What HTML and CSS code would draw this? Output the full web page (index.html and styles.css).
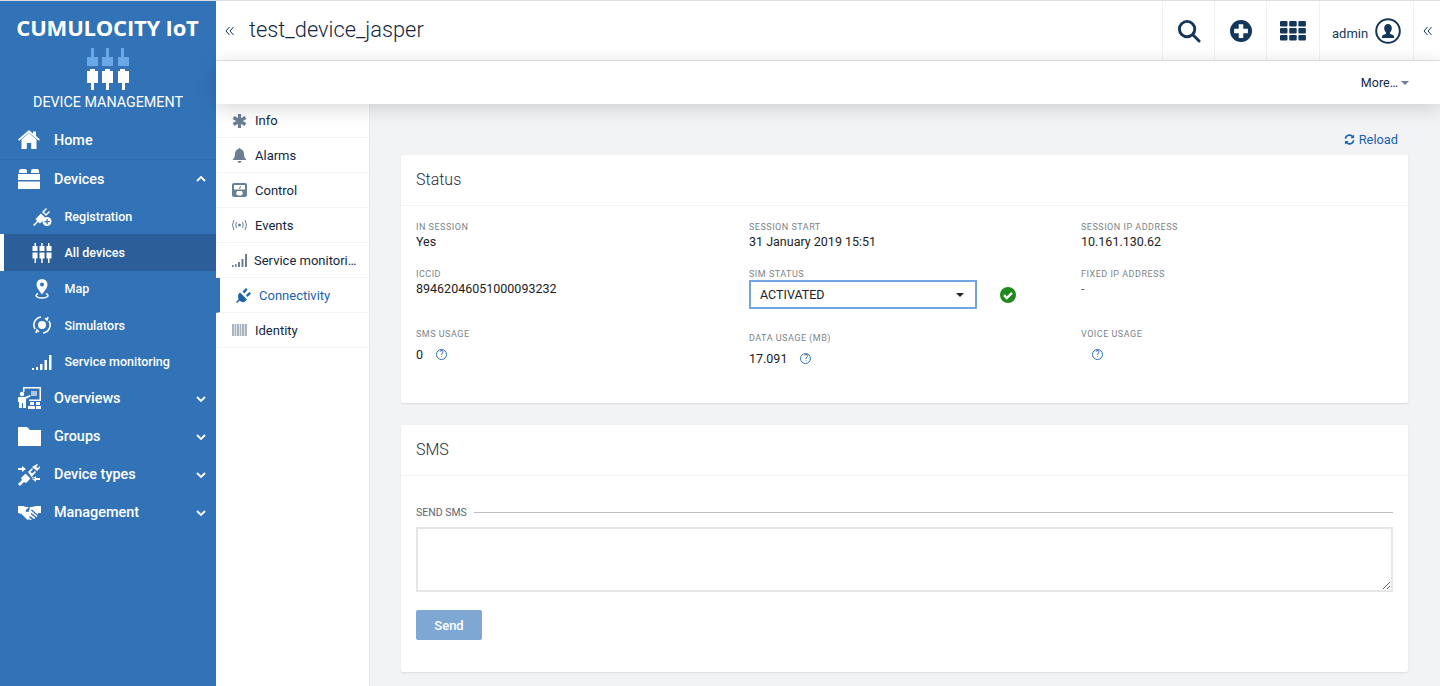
FILE: index.html
```html
<!DOCTYPE html>
<html lang="en">
<head>
  <meta charset="UTF-8">
  <meta name="viewport" content="width=device-width, initial-scale=1.0">
  <title>test_device_jasper</title>
  <link rel="stylesheet" href="styles.css">
</head>
<body>
  <div class="app">
    <aside class="sidebar">
      <div class="brand">
        <div class="brand-name">CUMULOCITY IoT</div>
        <svg class="brand-icon" width="42" height="42" viewBox="0 0 42 42">
          <g fill="#6aa8e6">
            <path d="M4 0h3v9h4v9H0V9h4zM19 0h3v9h4v9H15V9h4zM34 0h3v9h5v9H31V9h3z"/>
          </g>
          <g fill="#fff">
            <path d="M3 21h5v2h3v12H7v7H4v-7H0V23h3zM18 21h5v2h3v12h-4v7h-3v-7h-4V23h3zM33 21h5v2h4v12h-4v7h-3v-7h-4V23h2z"/>
          </g>
        </svg>
        <div class="brand-app">DEVICE MANAGEMENT</div>
      </div>
      <nav class="nav">
        <a class="nav-item nav-first">
          <svg class="nav-icon" width="22" height="20" viewBox="0 0 22 20" fill="#fff"><path d="M11 3 3.500 9.500V19h5.300v-6h4.400v6h5.300V9.500zM11 0 0 9.500l1.200 1.300L11 2.400l9.800 8.400 1.200-1.300-4-3.400V1.500h-3v2.200z"/></svg>
          <span>Home</span>
        </a>
        <a class="nav-item nav-open">
          <svg class="nav-icon" width="22" height="22" viewBox="0 0 22 22" fill="#fff"><path d="M1 3q0-2 2-2h4q2 0 2 2v2H1zM13 3q0-2 2-2h4q2 0 2 2v2h-8zM0 6h22v6H0zM0 13.500h22V21H0z"/></svg>
          <span>Devices</span>
          <svg class="chev" width="10" height="6" viewBox="0 0 10 6"><path d="M1 5l4-4 4 4" fill="none" stroke="#fff" stroke-width="1.800"/></svg>
        </a>
        <a class="sub-item">
          <svg class="sub-icon" width="20" height="20" viewBox="0 0 20 20" fill="#fff"><path d="M1 19l4-4-1.500-2L9 7.500l4 4-2 2.500a6 6 0 0 0-.5 1L8 17.500l-2-1.500-3.500 4zM10 6l4-4 1 1-3 3 2 2 3-3 1 1-4 4z"/><circle cx="15" cy="15.500" r="4.500"/><path d="M14.500 13h1.200v2h2v1.200h-2v2h-1.200v-2h-2V15h2z" fill="#3273b8"/></svg>
          <span>Registration</span>
        </a>
        <a class="sub-item sub-active">
          <svg class="sub-icon" width="20" height="20" viewBox="0 0 20 20" fill="#fff"><path d="M2.500 0h1.500v3h1.500v5H.5V3h2zM9.200 0h1.500v3h1.800v5h-5V3h1.700zM16 0h1.500v3h2v5h-5V3H16zM.5 9.500h5v6H4V20H2.500v-4.500h-2zM7.500 9.500h5v6h-1.800V20H9.200v-4.500H7.500zM14.500 9.500h5v6h-2V20H16v-4.500h-1.500z"/></svg>
          <span>All devices</span>
        </a>
        <a class="sub-item">
          <svg class="sub-icon sub-icon-map" width="14" height="20" viewBox="0 0 14 20"><path d="M7 0a5.500 5.500 0 0 1 5.500 5.500C12.500 9 9 12.500 7 15.500 5 12.500 1.500 9 1.500 5.500A5.500 5.500 0 0 1 7 0z" fill="#fff"/><circle cx="7" cy="5.500" r="2" fill="#3273b8"/><path d="M3 14.500c-4 2-1.500 4.500 4 4.500s8-2.500 4-4.500" fill="none" stroke="#fff" stroke-width="1.400"/></svg>
          <span>Map</span>
        </a>
        <a class="sub-item">
          <svg class="sub-icon" width="20" height="20" viewBox="0 0 20 20" fill="none" stroke="#fff" stroke-width="1.600"><circle cx="10" cy="10" r="4" fill="#fff" stroke="none"/><path d="M3 14A8 8 0 0 1 9 2M11 18a8 8 0 0 0 6-12M13 3l2 2 1-3M7 17l-2-2-1 3"/></svg>
          <span>Simulators</span>
        </a>
        <a class="sub-item">
          <svg class="sub-icon" width="20" height="20" viewBox="0 0 20 20" fill="#fff"><path d="M0 16h2v2H0zM4 15h2v3H4zM8 12h2.500v6H8zM12.500 8H15v10h-2.500zM17 3h2.500v15H17z"/></svg>
          <span>Service monitoring</span>
        </a>
        <a class="nav-item">
          <svg class="nav-icon" width="24" height="23" viewBox="0 0 24 23" fill="#fff"><path d="M5 0h18v14H11v-1.500h10.500v-11H6.500V5H5z"/><path d="M13 4h6v5h-6z" opacity=".6"/><circle cx="4" cy="7" r="2.200"/><path d="M0 10h7l5-2 .6 1.200L8 12v9H5v-5H4v5H1v-6H0zM12 15h4v3h-4zM18 15h4v3h-4zM10 19h7v3h-7zM18 19h5v3h-5z"/></svg>
          <span>Overviews</span>
          <svg class="chev" width="10" height="6" viewBox="0 0 10 6"><path d="M1 1l4 4 4-4" fill="none" stroke="#fff" stroke-width="1.800"/></svg>
        </a>
        <a class="nav-item">
          <svg class="nav-icon" width="23" height="19" viewBox="0 0 23 19" fill="#fff"><path d="M0 0h9l3 3h11v16H0z"/></svg>
          <span>Groups</span>
          <svg class="chev" width="10" height="6" viewBox="0 0 10 6"><path d="M1 1l4 4 4-4" fill="none" stroke="#fff" stroke-width="1.800"/></svg>
        </a>
        <a class="nav-item">
          <svg class="nav-icon" width="22" height="22" viewBox="0 0 22 22" fill="#fff"><path d="M0 20l4-4-1-2 4.500-4.500 5 5L8 19l-2-1-4 4zM10 8l4-4 1 1-2.500 3 1.500 1.500L17 7l1 1-4 4.500 3 2-2 .5zM14 3l5-3 1 1-2 2 2 1 2-2v2l-3 3zM0 4h4V2l4 3-4 3V6H0zM18 14v-2l-4 3 4 3v-2h4v-2z"/></svg>
          <span>Device types</span>
          <svg class="chev" width="10" height="6" viewBox="0 0 10 6"><path d="M1 1l4 4 4-4" fill="none" stroke="#fff" stroke-width="1.800"/></svg>
        </a>
        <a class="nav-item">
          <svg class="nav-icon" width="23" height="15" viewBox="0 0 23 15" fill="#fff"><path d="M0 1h5l3 1h3L8 5q-1 2 1 2 2 0 3.500-2l7 6-1 1-5-4-1 1 5 4-1.500 1-4-3-1 1 3 3-1 1-2-2-1.500 1-6-6L0 8zM12 2h2l4-1h5v7h-2.500l-1 1.500L14 4.500q-1.500 1-3 1.500z"/></svg>
          <span>Management</span>
          <svg class="chev" width="10" height="6" viewBox="0 0 10 6"><path d="M1 1l4 4 4-4" fill="none" stroke="#fff" stroke-width="1.800"/></svg>
        </a>
      </nav>
    </aside>

    <div class="main">
      <header class="topbar">
        <div class="collapse">
          <svg width="9" height="10" viewBox="0 0 9 10" fill="none" stroke="#14365a"><path d="M4.500 1 1 5l3.500 4M8.500 1 5 5l3.500 4"/></svg>
        </div>
        <h1 class="title">test_device_jasper</h1>
        <div class="top-btn">
          <svg width="24" height="24" viewBox="0 0 25 25" fill="none" stroke="#14365a" stroke-width="3"><circle cx="10.500" cy="10.500" r="8"/><path d="M16.500 16.500l6.500 6.500" stroke-linecap="round"/></svg>
        </div>
        <div class="top-btn">
          <svg width="22" height="22" viewBox="0 0 24 24"><circle cx="12" cy="12" r="12" fill="#14365a"/><path d="M9.500 4.500h5v5h5v5h-5v5h-5v-5h-5v-5h5z" fill="#fff"/></svg>
        </div>
        <div class="top-btn top-apps">
          <svg width="26" height="20" viewBox="0 0 26 20" fill="#14365a"><rect width="7.500" height="5.500" rx="1"/><rect x="9.200" width="7.500" height="5.500" rx="1"/><rect x="18.400" width="7.500" height="5.500" rx="1"/><rect y="7" width="7.500" height="5.500" rx="1"/><rect x="9.200" y="7" width="7.500" height="5.500" rx="1"/><rect x="18.400" y="7" width="7.500" height="5.500" rx="1"/><rect y="14" width="7.500" height="5.500" rx="1"/><rect x="9.200" y="14" width="7.500" height="5.500" rx="1"/><rect x="18.400" y="14" width="7.500" height="5.500" rx="1"/></svg>
        </div>
        <div class="top-user">
          <span>admin</span>
          <svg width="26" height="26" viewBox="0 0 26 26"><circle cx="13" cy="13" r="11.800" fill="none" stroke="#14365a" stroke-width="2"/><path d="M13 6c2.500 0 3.800 2 3.800 4.200 0 2-1 3.500-1.800 4.300v1.300c1 .6 3.500 1 4 2.200v2h-12v-2c.5-1.200 3-1.600 4-2.200v-1.300c-.8-.8-1.800-2.300-1.800-4.300C9.200 8 10.500 6 13 6z" fill="#14365a"/></svg>
        </div>
        <div class="collapse collapse-right">
          <svg width="9" height="10" viewBox="0 0 9 10" fill="none" stroke="#14365a"><path d="M4.500 1 1 5l3.500 4M8.500 1 5 5l3.500 4"/></svg>
        </div>
      </header>
      <div class="actionbar">
        <span>More…</span>
        <i class="caret"></i>
      </div>

      <div class="body">
        <ul class="tabs">
          <li class="tab tab-first">
            <svg class="tab-icon" width="15" height="14" viewBox="0 0 15 14" fill="none" stroke="#6a7f94" stroke-width="3.200"><path d="M7.500 0v14M1.500 3.500l12 7M1.500 10.500l12-7"/></svg>
            <span>Info</span>
          </li>
          <li class="tab">
            <svg class="tab-icon" width="15" height="15" viewBox="0 0 14 15" fill="#6a7f94"><path d="M7 0q1 0 1 1 3.500 1 3.500 5c0 3 1 4.500 2.500 6H0c1.500-1.500 2.500-3 2.500-6Q2.500 2 6 1q0-1 1-1zM5 13h4q-.5 2-2 2t-2-2z"/></svg>
            <span>Alarms</span>
          </li>
          <li class="tab">
            <svg class="tab-icon" width="15" height="14" viewBox="0 0 15 14"><rect width="15" height="14" rx="2" fill="#6a7f94"/><rect x="2" y="2" width="11" height="4.500" fill="#fff"/><path d="M7.500 6l1-3" stroke="#6a7f94"/><path d="M5 8h5l1 3-2 1.500H6L4 11z" fill="#fff"/></svg>
            <span>Control</span>
          </li>
          <li class="tab">
            <svg class="tab-icon" width="15" height="12" viewBox="0 0 15 12" fill="none" stroke="#6a7f94"><circle cx="7.500" cy="6" r="1.500" fill="#6a7f94" stroke="none"/><path d="M4.500 3q-1.500 3 0 6M10.500 3q1.500 3 0 6M2 1q-3 5 0 10M13 1q3 5 0 10"/></svg>
            <span>Events</span>
          </li>
          <li class="tab tab-narrow">
            <svg class="tab-icon" width="15" height="13" viewBox="0 0 15 13" fill="#6a7f94"><path d="M0 11h1.500v2H0zM3 10h1.500v3H3zM6 8h2v5H6zM9.500 5h2v8h-2zM13 0h2v13h-2z"/></svg>
            <span>Service monitori…</span>
          </li>
          <li class="tab tab-active">
            <svg class="tab-icon" width="15" height="15" viewBox="0 0 15 15" fill="#1b62ad"><path d="M4 4.500l7 7-2 2Q6.500 15 4 13 1 10 2.500 6zM6.500 3.500 10 0l1.500 1.500-3 4zM10 7l3.500-3L15 5.500 11.500 9zM0 14l3.500-3.500 1.200 1.200L1 15z"/></svg>
            <span>Connectivity</span>
          </li>
          <li class="tab">
            <svg class="tab-icon" width="15" height="12" viewBox="0 0 15 12"><rect width="15" height="12" fill="#dfe3e7"/><path d="M0 0h2v12H0zM3 0h1v12H3zM5 0h2v12H5zM8 0h1v12H8zM10 0h2v12h-2zM13 0h2v12h-2z" fill="#a9b4bf"/></svg>
            <span>Identity</span>
          </li>
        </ul>

        <section class="content">
          <div class="reload">
            <svg width="11" height="11" viewBox="0 0 12 12" fill="none" stroke="#1b62ad" stroke-width="1.800"><path d="M1.500 5A4.500 4.500 0 0 1 9.500 3M10.500 7A4.500 4.500 0 0 1 2.500 9"/><path d="M11 .5v4H7zM1 11.500v-4h4z" fill="#1b62ad" stroke="none"/></svg>
            <span>Reload</span>
          </div>

          <div class="card card-status">
            <div class="card-head">Status</div>
            <div class="grid">
              <div class="field">
                <label>IN SESSION</label>
                <div class="value">Yes</div>
              </div>
              <div class="field">
                <label>SESSION START</label>
                <div class="value">31 January 2019 15:51</div>
              </div>
              <div class="field">
                <label>SESSION IP ADDRESS</label>
                <div class="value">10.161.130.62</div>
              </div>
              <div class="field">
                <label>ICCID</label>
                <div class="value">89462046051000093232</div>
              </div>
              <div class="field">
                <label>SIM STATUS</label>
                <div class="sim-row">
                  <div class="select"><span>ACTIVATED</span><i class="select-caret"></i></div>
                  <svg width="16" height="16" viewBox="0 0 16 16"><circle cx="8" cy="8" r="8" fill="#1e8a1e"/><path d="M4 8.200l2.800 2.800L12 5.800" fill="none" stroke="#fff" stroke-width="2.400"/></svg>
                </div>
              </div>
              <div class="field">
                <label>FIXED IP ADDRESS</label>
                <div class="value value-dash">-</div>
              </div>
              <div class="field">
                <label>SMS USAGE</label>
                <div class="value usage"><span>0</span><i class="help">?</i></div>
              </div>
              <div class="field field-data">
                <label>DATA USAGE (MB)</label>
                <div class="value usage"><span>17.091</span><i class="help">?</i></div>
              </div>
              <div class="field">
                <label>VOICE USAGE</label>
                <div class="value usage usage-voice"><i class="help">?</i></div>
              </div>
            </div>
          </div>

          <div class="card card-sms">
            <div class="card-head">SMS</div>
            <div class="sms-body">
              <div class="legend"><span>SEND SMS</span><i></i></div>
              <textarea class="sms-text"></textarea>
              <button class="send">Send</button>
            </div>
          </div>
        </section>
      </div>
    </div>
  </div>
</body>
</html>
```

FILE: styles.css
```css
* {
  box-sizing: border-box;
}
html, body {
  margin: 0;
  height: 686px;
  overflow: hidden;
}
body {
  font-family: Roboto, "Liberation Sans", sans-serif;
  font-size: 13px;
  color: #14273f;
  background: #fff;
}
.app {
  display: flex;
  height: 686px;
  border-top: 1px solid #dcdfe2;
}
.sidebar {
  width: 216px;
  flex: none;
  background: #3273b8;
  color: #fff;
}
.brand {
  display: flex;
  flex-direction: column;
  align-items: center;
  height: 114px;
}
.brand-name {
  font-family: "Open Sans", Lato, sans-serif;
  font-size: 22px;
  font-weight: 700;
  line-height: 24px;
  margin-top: 14px;
  padding-right: 1px;
  white-space: nowrap;
  letter-spacing: -.2px;
}
.brand-icon {
  margin-top: 9px;
  flex: none;
}
.brand-app {
  font-size: 14.300px;
  line-height: 16px;
  margin-top: 4px;
  white-space: nowrap;
}
.nav-item {
  display: flex;
  align-items: center;
  height: 38px;
  padding-left: 18px;
  font-size: 14.400px;
  font-weight: 500;
  position: relative;
}
.nav-first {
  height: 44px;
  padding-top: 6px;
}
.nav-open {
  height: 39px;
  border-top: 1px solid #2f6cae;
}
.nav-item span {
  position: absolute;
  left: 54px;
}
.nav-icon {
  flex: none;
}
.chev {
  margin-left: auto;
  margin-right: 10px;
}
.sub-item {
  display: flex;
  align-items: center;
  height: 36.400px;
  font-size: 12.500px;
  font-weight: 500;
  position: relative;
}
.sub-active {
  background: #2c5f99;
  border-left: 4px solid #fff;
}
.sub-icon {
  position: absolute;
  left: 32px;
}
.sub-icon-map {
  left: 35px;
}
.sub-item span {
  position: absolute;
  left: 64.500px;
}
.sub-active .sub-icon {
  left: 28px;
}
.sub-active span {
  left: 60.500px;
}

.main {
  flex: 1;
  min-width: 0;
  display: flex;
  flex-direction: column;
}
.topbar {
  display: flex;
  align-items: stretch;
  height: 60px;
  border-bottom: 1px solid #e2e4e6;
  flex: none;
}
.collapse {
  width: 27px;
  padding-left: 9px;
  display: flex;
  align-items: center;
}
.collapse-right {
  border-left: 1px solid #eff0f1;
}
.title {
  flex: 1;
  margin: 0 0 0 6px;
  font-size: 21.800px;
  font-weight: 300;
  line-height: 58px;
  color: #14273f;
}
.top-btn {
  width: 52px;
  display: flex;
  align-items: center;
  justify-content: center;
  border-left: 1px solid #eff0f1;
}
.top-apps {
  width: 53px;
}
.top-user {
  width: 94px;
  display: flex;
  align-items: center;
  gap: 7px;
  padding-left: 12px;
  border-left: 1px solid #eff0f1;
  font-size: 13px;
  color: #14365a;
}
.top-user span {
  padding-top: 6px;
}
.actionbar {
  display: flex;
  align-items: center;
  justify-content: flex-end;
  height: 43px;
  padding-right: 31px;
  flex: none;
  background: #fff;
  box-shadow: 0 4px 20px rgba(0, 0, 0, .16);
  position: relative;
  z-index: 2;
  font-size: 12.500px;
  color: #14273f;
}
.caret {
  width: 0;
  height: 0;
  margin-left: 3px;
  border-left: 4px solid transparent;
  border-right: 4px solid transparent;
  border-top: 4px solid #6a7f94;
}
.body {
  flex: 1;
  min-height: 0;
  display: flex;
}
.tabs {
  width: 154px;
  flex: none;
  margin: 0;
  padding: 0;
  list-style: none;
  background: #fff;
  border-right: 1px solid #e6e8ea;
}
.tab {
  height: 35px;
  display: flex;
  align-items: center;
  gap: 8px;
  padding-left: 16px;
  border-bottom: 1px solid #f2f3f4;
  white-space: nowrap;
  color: #14273f;
}
.tab-first {
  height: 34px;
}
.tab-icon {
  flex: none;
}
.tab-narrow {
  gap: 7px;
}
.tab-active {
  border-left: 4px solid #3273b8;
  color: #1b62ad;
  margin-right: -1px;
}
.content {
  flex: 1;
  min-width: 0;
  background: #f2f3f5;
  padding: 27px 32px 0 31px;
}
.reload {
  display: flex;
  align-items: center;
  justify-content: flex-end;
  gap: 4px;
  height: 16px;
  padding-right: 10px;
  margin-bottom: 8px;
  color: #1b62ad;
  font-size: 12.800px;
}
.card {
  background: #fff;
  border-radius: 2px;
  box-shadow: 0 1px 2px rgba(0, 0, 0, .1);
}
.card-status {
  height: 248px;
  margin-bottom: 22px;
}
.card-sms {
  height: 247px;
}
.card-head {
  height: 51px;
  padding-left: 15px;
  font-size: 16px;
  font-weight: 300;
  line-height: 49px;
  color: #1f2d3a;
  border-bottom: 1px solid #f2f3f4;
}
.grid {
  display: grid;
  grid-template-columns: 333px 332px 1fr;
  grid-template-rows: 47px 60px 1fr;
  padding: 15px 15px 0;
}
.field label {
  display: block;
  font-size: 9px;
  line-height: 12px;
  letter-spacing: .5px;
  color: #7b8388;
}
.value {
  font-size: 12.500px;
  line-height: 17px;
  color: #222;
}
.value-dash {
  color: #666;
}
.sim-row {
  display: flex;
  align-items: center;
  gap: 23px;
}
.select {
  width: 228px;
  height: 29px;
  padding: 0 9px;
  display: flex;
  align-items: center;
  justify-content: space-between;
  border: 2px solid #71a6e0;
  font-size: 12.500px;
  color: #222;
}
.select-caret {
  width: 0;
  height: 0;
  margin-right: 2px;
  border-left: 4px solid transparent;
  border-right: 4px solid transparent;
  border-top: 4px solid #222;
}
.usage {
  display: flex;
  align-items: center;
  min-height: 17px;
  margin-top: 6px;
}
.field-data label {
  margin-top: 4px;
}
.usage-voice {
  padding-left: 11px;
}
.help {
  width: 11px;
  height: 11px;
  margin-left: 13px;
  border: 1px solid #3273b8;
  border-radius: 50%;
  font-size: 8.500px;
  line-height: 9px;
  font-style: normal;
  text-align: center;
  color: #1b62ad;
}
.usage-voice .help {
  margin-left: 0;
}
.sms-body {
  padding: 29px 15px 0;
}
.legend {
  display: flex;
  align-items: center;
  gap: 7px;
  height: 14px;
  font-size: 10.500px;
  color: #5c666f;
}
.legend i {
  flex: 1;
  height: 1px;
  background: #b9bfc2;
}
.sms-text {
  display: block;
  width: 100%;
  height: 65px;
  margin-top: 8px;
  border: 2px solid #e6e6e6;
  background: #fff;
  outline: none;
}
.send {
  display: block;
  width: 66px;
  height: 30px;
  margin-top: 18px;
  border: none;
  border-radius: 2px;
  background: #7ea7d3;
  color: #fff;
  font-family: Roboto, sans-serif;
  font-size: 13px;
  font-weight: 500;
}
```
